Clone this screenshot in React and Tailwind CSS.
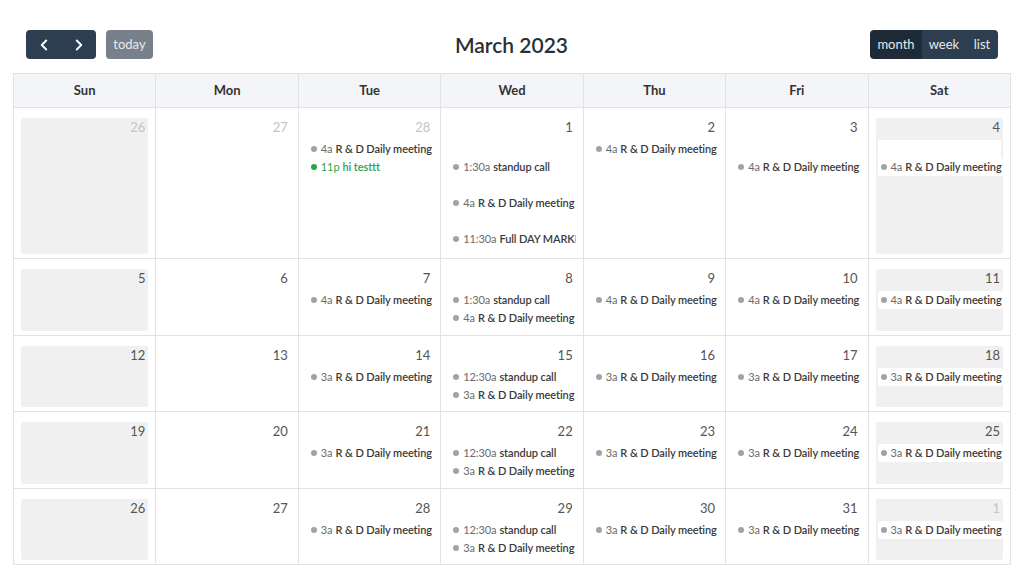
import React from 'react';
import { ChevronLeft, ChevronRight } from 'lucide-react';

const days = ['Sun', 'Mon', 'Tue', 'Wed', 'Thu', 'Fri', 'Sat'];

const rd = (t) => ({ time: t, title: 'R & D Daily meeting' });
const su = (t) => ({ time: t, title: 'standup call' });
const gap = { spacer: true };

const weeks = [
	{
		h: 'h-[151px]',
		cells: [
			{ n: 26, other: true, ev: [] },
			{ n: 27, other: true, ev: [] },
			{ n: 28, other: true, ev: [rd('4a'), { time: '11p', title: 'hi testtt', green: true }] },
			{ n: 1, ev: [gap, su('1:30a'), gap, rd('4a'), gap, { time: '11:30a', title: 'Full DAY MARKETING' }] },
			{ n: 2, ev: [rd('4a')] },
			{ n: 3, ev: [gap, rd('4a')] },
			{ n: 4, ev: [{ spacer: true, white: true }, rd('4a')] },
		],
	},
	{
		h: 'h-[77px]',
		cells: [
			{ n: 5, ev: [] },
			{ n: 6, ev: [] },
			{ n: 7, ev: [rd('4a')] },
			{ n: 8, ev: [su('1:30a'), rd('4a')] },
			{ n: 9, ev: [rd('4a')] },
			{ n: 10, ev: [rd('4a')] },
			{ n: 11, ev: [rd('4a')] },
		],
	},
	{
		h: 'h-[76px]',
		cells: [
			{ n: 12, ev: [] },
			{ n: 13, ev: [] },
			{ n: 14, ev: [rd('3a')] },
			{ n: 15, ev: [su('12:30a'), rd('3a')] },
			{ n: 16, ev: [rd('3a')] },
			{ n: 17, ev: [rd('3a')] },
			{ n: 18, ev: [rd('3a')] },
		],
	},
	{
		h: 'h-[77px]',
		cells: [
			{ n: 19, ev: [] },
			{ n: 20, ev: [] },
			{ n: 21, ev: [rd('3a')] },
			{ n: 22, ev: [su('12:30a'), rd('3a')] },
			{ n: 23, ev: [rd('3a')] },
			{ n: 24, ev: [rd('3a')] },
			{ n: 25, ev: [rd('3a')] },
		],
	},
	{
		h: 'h-[76px]',
		cells: [
			{ n: 26, ev: [] },
			{ n: 27, ev: [] },
			{ n: 28, ev: [rd('3a')] },
			{ n: 29, ev: [su('12:30a'), rd('3a')] },
			{ n: 30, ev: [rd('3a')] },
			{ n: 31, ev: [rd('3a')] },
			{ n: 1, other: true, ev: [rd('3a')] },
		],
	},
];

const Event = ({ ev, weekend }) => {
	if (ev.spacer) {
		return <div className={`h-[18px] ${ev.white ? 'bg-white mx-[2px]' : ''}`}></div>;
	}
	return (
		<div
			className={`h-[18px] ml-[2px] pl-[3px] pr-[1px] flex items-center gap-[3px] whitespace-nowrap overflow-hidden rounded-[3px] text-[11px] tracking-[-0.1px] ${
				weekend ? 'bg-white' : ''
			}`}>
			<span
				className={`shrink-0 w-[6px] h-[6px] rounded-full mr-[1px] ${
					ev.green ? 'bg-[#28a745]' : 'bg-[#a3a3a3]'
				}`}></span>
			<span className={ev.green ? 'text-[#2ea44f]' : 'text-[#6b6b6b]'}>{ev.time}</span>
			<span className={`font-semibold ${ev.green ? 'text-[#2ea44f]' : 'text-[#3a3a3a]'}`}>
				{ev.title}
			</span>
		</div>
	);
};

const Cell = ({ cell, weekend, h }) => {
	const body = (
		<>
			<div
				className={`h-[18px] mt-[3px] pr-[3px] text-right text-[13px] leading-[18px] ${
					cell.other ? 'text-[#c4c4c4]' : 'text-[#555]'
				}`}>
				{cell.n}
			</div>
			<div className="mt-[4px] flex flex-col">
				{cell.ev.map((ev, i) => (
					<Event key={i} ev={ev} weekend={weekend} />
				))}
			</div>
		</>
	);
	return (
		<div className={`${h} border-r border-b border-[#e2e2e2] p-[7px] min-w-0`}>
			{weekend ? (
				<div className="h-full bg-[#f0f0f0] rounded-[2px]">{body}</div>
			) : (
				body
			)}
		</div>
	);
};

export default function App() {
	return (
		<div
			className="w-[1024px] h-[579px] bg-white px-[13px] pt-[30px] overflow-hidden"
			style={{ fontFamily: 'Lato, "Open Sans", sans-serif' }}>
			{/* Toolbar */}
			<div className="flex items-center justify-between h-[29px] mb-[14px] px-[13px]">
				<div className="flex items-center gap-[10px]">
					<div className="flex h-[29px] w-[70px] bg-[#2c3e50] rounded-[4px] text-white">
						<button className="flex-1 flex items-center justify-center">
							<ChevronLeft className="w-[18px] h-[18px]" strokeWidth={2.5} />
						</button>
						<button className="flex-1 flex items-center justify-center">
							<ChevronRight className="w-[18px] h-[18px]" strokeWidth={2.5} />
						</button>
					</div>
					<button className="h-[29px] w-[47px] bg-[#78818b] rounded-[4px] text-[13px] text-[#e8eaec]">
						today
					</button>
				</div>
				<h2 className="text-[21px] leading-[29px] font-semibold text-[#2b2f33]">March 2023</h2>
				<div className="flex h-[29px] rounded-[4px] overflow-hidden text-[13px] text-[#e6e9ec]">
					<button className="w-[52px] bg-[#1e2b37]">month</button>
					<button className="w-[44px] bg-[#2c3e50]">week</button>
					<button className="w-[32px] bg-[#2c3e50]">list</button>
				</div>
			</div>

			{/* Grid */}
			<div className="grid grid-cols-7 border-l border-t border-[#e2e2e2]">
				{days.map((d) => (
					<div
						key={d}
						className="h-[34px] flex items-center justify-center bg-[#f3f5f8] border-r border-b border-[#e2e2e2] text-[13px] font-bold text-[#333]">
						{d}
					</div>
				))}
				{weeks.map((w, wi) =>
					w.cells.map((c, ci) => (
						<Cell key={`${wi}-${ci}`} cell={c} weekend={ci === 0 || ci === 6} h={w.h} />
					))
				)}
			</div>
		</div>
	);
}
